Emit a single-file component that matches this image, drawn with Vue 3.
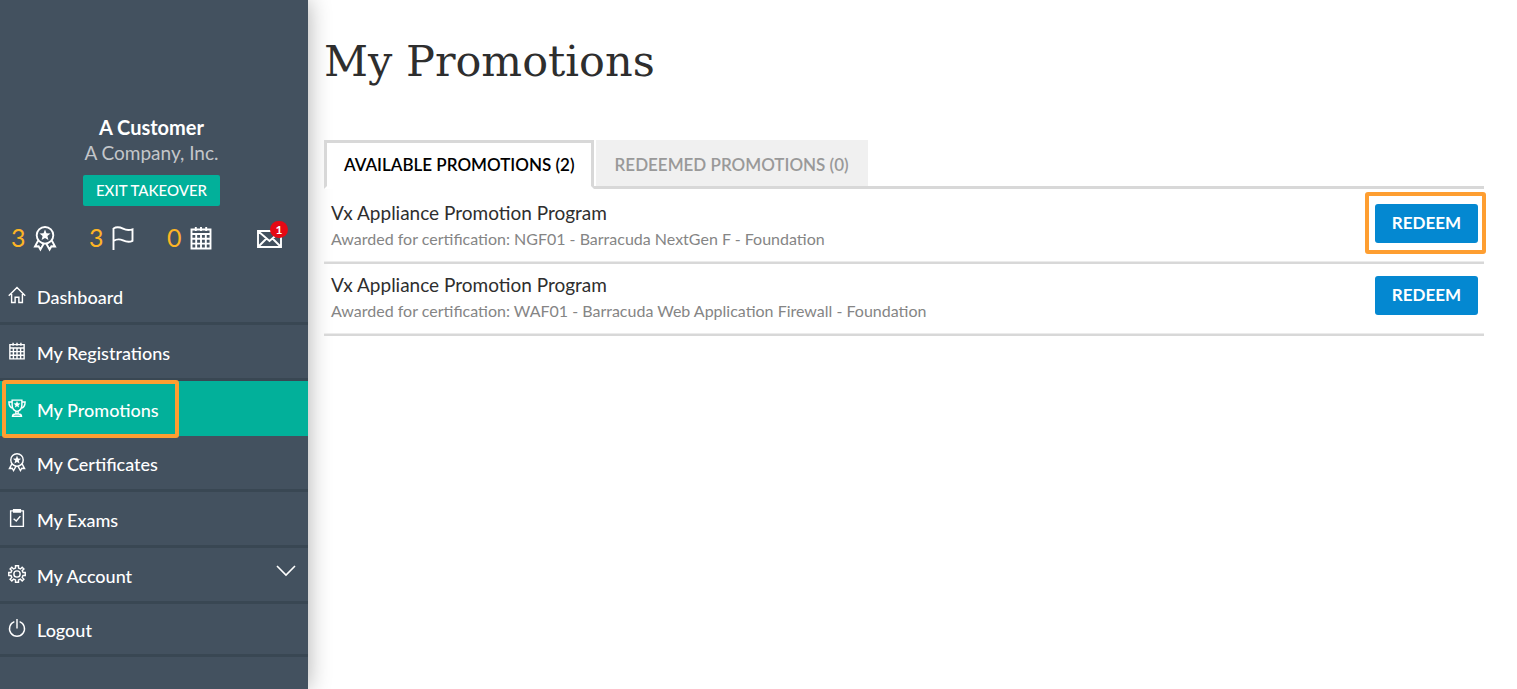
<script setup>
import { ref } from 'vue'

const stats = [
  { icon: 'ribbon', value: 3, label: 'Certificates' },
  { icon: 'flag', value: 3, label: 'Promotions' },
  { icon: 'calendar', value: 0, label: 'Registrations' }
]

const nav = [
  { icon: 'home', label: 'Dashboard' },
  { icon: 'calendar', label: 'My Registrations' },
  { icon: 'trophy', label: 'My Promotions' },
  { icon: 'ribbon', label: 'My Certificates' },
  { icon: 'clipboard', label: 'My Exams' },
  { icon: 'gear', label: 'My Account', expandable: true },
  { icon: 'power', label: 'Logout' }
]
const current = ref('My Promotions')

const tabs = [
  { id: 'available', label: 'AVAILABLE PROMOTIONS (2)' },
  { id: 'redeemed', label: 'REDEEMED PROMOTIONS (0)' }
]
const activeTab = ref('available')

const promotions = [
  {
    title: 'Vx Appliance Promotion Program',
    detail: 'Awarded for certification: NGF01 - Barracuda NextGen F - Foundation',
    highlighted: true
  },
  {
    title: 'Vx Appliance Promotion Program',
    detail: 'Awarded for certification: WAF01 - Barracuda Web Application Firewall - Foundation',
    highlighted: false
  }
]

const star = 'M12 3.4l1.500 3.800 4 .3-3.100 2.600 1 3.900-3.400-2.100-3.400 2.100 1-3.900-3.100-2.600 4-.3z'
const icons = {
  ribbon: [
    { d: 'M12 1a8.300 8.300 0 1 1 0 16.600a8.300 8.300 0 1 1 0-16.600z' },
    { d: star, fill: true },
    { d: 'M5.200 14.500L2 20.500l3.600-.2 1.800 3.200 3.400-6M18.800 14.500l3.200 6-3.600-.2-1.800 3.200-3.400-6' }
  ],
  flag: [{ d: 'M2.500 24V2M2.500 2.500c3-1.800 6-1.500 9.500.200s6.500 1.600 9.500.6v11.500c-3 1.600-6 1.200-9.500-.4s-6.500-1.400-9.500.6' }],
  calendar: [
    { d: 'M2.500 3.500h19v19h-19zM2.500 8h19M2.500 12.800h19M2.500 17.600h19M7.200 8v14.500M12 8v14.500M16.800 8v14.500M6.800 1v4M12 1v4M17.200 1v4' }
  ],
  home: [{ d: 'M1 13L12 2 23 13M4.800 10.500V22h4.700v-7h5v7h4.700V10.500' }],
  trophy: [
    { d: 'M5.500 1.500h13v6c0 5-2.500 8-6.500 9-4-1-6.500-4-6.500-9zM5.500 4H1.200c0 5 1.800 7.500 5.600 8.500M18.500 4h4.300c0 5-1.800 7.500-5.600 8.500M10.500 16.500v3.500M13.500 16.500v3.500M6 23c0-2 1.500-3 4-3h4c2.500 0 4 1 4 3z' },
    { d: 'M12 2.800l1.300 3 3.200.3-2.500 2.100.8 3.200-2.800-1.700-2.800 1.700.8-3.200-2.500-2.100 3.200-.3z', fill: true }
  ],
  clipboard: [
    { d: 'M3.500 2.500h17v20.700h-17zM7.500 1h9v3h-9z' },
    { d: 'M7.500 13l3.500 3 5.500-6.500' }
  ],
  gear: [
    { d: 'M10 1h4v3.200l2.600 1.100 2.300-2.300 2.300 2.300-2.300 2.300L20 10h3v4h-3l-1.100 2.600 2.300 2.300-2.300 2.300-2.300-2.300L14 19.900V23h-4v-3.100l-2.600-1-2.300 2.300-2.300-2.300 2.300-2.300L4 14H1v-4h3l1.100-2.400-2.300-2.300L5.100 3l2.300 2.300L10 4.200z' },
    { d: 'M12 7.800a4.200 4.200 0 1 1 0 8.400a4.200 4.200 0 1 1 0-8.400z' }
  ],
  power: [{ d: 'M8.500 3.600a10 10 0 1 0 7 0M12 0v12.500' }]
}
</script>

<template>
  <div class="layout">
    <aside class="sidebar">
      <div class="profile">
        <strong class="name">A Customer</strong>
        <span class="company">A Company, Inc.</span>
        <button class="exit" type="button">EXIT TAKEOVER</button>
      </div>

      <div class="stats">
        <a v-for="s in stats" :key="s.icon" class="stat" href="#" :aria-label="s.label">
          <span class="count">{{ s.value }}</span>
          <svg class="stat-icon" viewBox="0 0 24 24" aria-hidden="true">
            <path v-for="p in icons[s.icon]" :key="p.d" :d="p.d" :class="{ solid: p.fill }" />
          </svg>
        </a>
        <a class="mail" href="#" aria-label="Messages">
          <svg class="mail-icon" viewBox="0 0 25 18" aria-hidden="true">
            <path d="M1 1h23v16H1zM1.500 1.500l11 9.500 11-9.500M1.500 16.500l8-8M23.500 16.500l-8-8" />
          </svg>
          <span class="badge">1</span>
        </a>
      </div>

      <nav class="nav">
        <a
          v-for="item in nav"
          :key="item.label"
          href="#"
          class="nav-item"
          :class="{ current: item.label === current }"
          @click.prevent="current = item.label"
        >
          <svg class="nav-icon" viewBox="0 0 24 24" aria-hidden="true">
            <path v-for="p in icons[item.icon]" :key="p.d" :d="p.d" :class="{ solid: p.fill }" />
          </svg>
          <span>{{ item.label }}</span>
          <svg v-if="item.expandable" class="chevron" viewBox="0 0 20 12" aria-hidden="true">
            <path d="M1 1l9 9 9-9" />
          </svg>
        </a>
      </nav>
    </aside>

    <main class="content">
      <h1>My Promotions</h1>
      <div class="tabs" role="tablist">
        <button
          v-for="t in tabs"
          :key="t.id"
          type="button"
          role="tab"
          class="tab"
          :class="{ selected: t.id === activeTab }"
          :aria-selected="t.id === activeTab"
          @click="activeTab = t.id"
        >{{ t.label }}</button>
      </div>
      <ul class="promotions">
        <li v-for="p in promotions" :key="p.detail" class="promotion">
          <div class="text">
            <div class="title">{{ p.title }}</div>
            <div class="detail">{{ p.detail }}</div>
          </div>
          <button type="button" class="redeem" :class="{ highlighted: p.highlighted }">REDEEM</button>
        </li>
      </ul>
    </main>
  </div>
</template>

<style>
body {
  margin: 0;
  background: #fff;
}
</style>

<style scoped>
.layout {
  display: grid;
  grid-template-columns: 308px 1fr;
  min-height: 100vh;
  font-family: Lato, "Liberation Sans", sans-serif;
}
.layout *,
.layout *::after {
  box-sizing: border-box;
}
button {
  font-family: inherit;
  cursor: pointer;
}
svg {
  fill: none;
  stroke: #fff;
  overflow: visible;
}
.solid {
  fill: #fff;
  stroke: none;
}
.sidebar {
  background: #43515f;
  color: #fff;
  box-shadow: 0 0 22px rgba(0, 0, 0, 0.32);
}
.profile {
  display: flex;
  flex-direction: column;
  align-items: center;
  padding: 115px 5px 0 0;
}
.name {
  font-size: 20px;
  line-height: 25px;
  font-weight: 700;
}
.company {
  font-size: 19px;
  line-height: 25px;
  color: #c3c6ca;
}
.exit {
  margin-top: 10px;
  height: 31px;
  padding: 0 13px 1px;
  border: 0;
  border-radius: 2px;
  background: #02b09a;
  color: #fff;
  font-size: 15px;
  font-weight: 500;
}
.stats {
  display: flex;
  margin-top: 15px;
  padding-left: 11px;
  height: 48px;
}
.stat {
  display: flex;
  align-items: flex-start;
  width: 78px;
  color: #fdb525;
  text-decoration: none;
}
.count {
  width: 22px;
  font-size: 25px;
  line-height: 32px;
}
.stat-icon {
  width: 24px;
  height: 24px;
  margin-top: 5px;
  stroke-width: 1.9;
}
.mail {
  position: relative;
  margin: 9px 0 0 12px;
  width: 25px;
  height: 18px;
}
.mail-icon {
  display: block;
  width: 25px;
  height: 18px;
  stroke-width: 1.9;
}
.badge {
  position: absolute;
  left: 13px;
  top: -9px;
  width: 18px;
  height: 17px;
  border-radius: 9px;
  background: #e50914;
  color: #fff;
  font-size: 12px;
  line-height: 17px;
  font-weight: 700;
  text-align: center;
}
.nav-item {
  position: relative;
  display: flex;
  align-items: center;
  height: 56px;
  padding: 2px 12px 0 8px;
  border-bottom: 3px solid #394753;
  color: #fff;
  font-size: 18px;
  font-weight: 500;
  text-decoration: none;
}
.nav-item.current {
  height: 55px;
  border-bottom: 0;
  background: #02b09a;
}
.nav-item.current::after {
  content: "";
  position: absolute;
  left: 2px;
  top: -1px;
  width: 177px;
  height: 58px;
  border: 4px solid #fe9e31;
  border-radius: 3px;
  z-index: 1;
}
.nav-item:last-child {
  height: 53px;
}
.nav-icon {
  width: 18px;
  height: 18px;
  margin: 0 11px 4px 0;
  stroke-width: 1.9;
}
.chevron {
  width: 20px;
  height: 12px;
  margin: 0 0 10px auto;
  stroke-width: 1.6;
}
.content {
  padding: 32px 33px 0 16px;
}
h1 {
  margin: 0;
  color: #2e2e2e;
  font-family: "DejaVu Serif", serif;
  font-size: 43px;
  line-height: 58px;
  font-weight: 400;
}
.tabs {
  display: flex;
  gap: 2px;
  margin-top: 50px;
  height: 49px;
  box-shadow: inset 0 -3px #d8d8d8;
}
.tab {
  height: 46px;
  padding: 2px 19px 0;
  border: 0;
  background: #f0f0f0;
  color: #999;
  font-size: 17px;
  font-weight: 600;
}
.tab.selected {
  height: 49px;
  padding: 0 16px 1px 17px;
  border: 3px solid #d8d8d8;
  border-bottom-color: #fff;
  background: #fff;
  color: #000;
}
.promotions {
  margin: 0;
  padding: 3px 0 0;
  list-style: none;
}
.promotion {
  display: flex;
  justify-content: space-between;
  align-items: flex-start;
  min-height: 72px;
  padding: 8px 6px 0 7px;
  border-bottom: 2px solid #d8d8d8;
  box-shadow: inset 0 -1px #ebebeb;
}
.title {
  color: #2e2e2e;
  font-size: 19px;
  line-height: 26px;
}
.detail {
  color: #858585;
  font-size: 16px;
  line-height: 25px;
}
.redeem {
  position: relative;
  width: 103px;
  height: 39px;
  margin-top: 4px;
  padding: 0 0 2px;
  border: 0;
  border-radius: 3px;
  background: #0488d1;
  color: #fff;
  font-size: 17px;
  font-weight: 700;
}
.redeem.highlighted::after {
  content: "";
  position: absolute;
  inset: -12px -8px -11px -10px;
  border: 4px solid #fe9e31;
  border-radius: 3px;
}
</style>
